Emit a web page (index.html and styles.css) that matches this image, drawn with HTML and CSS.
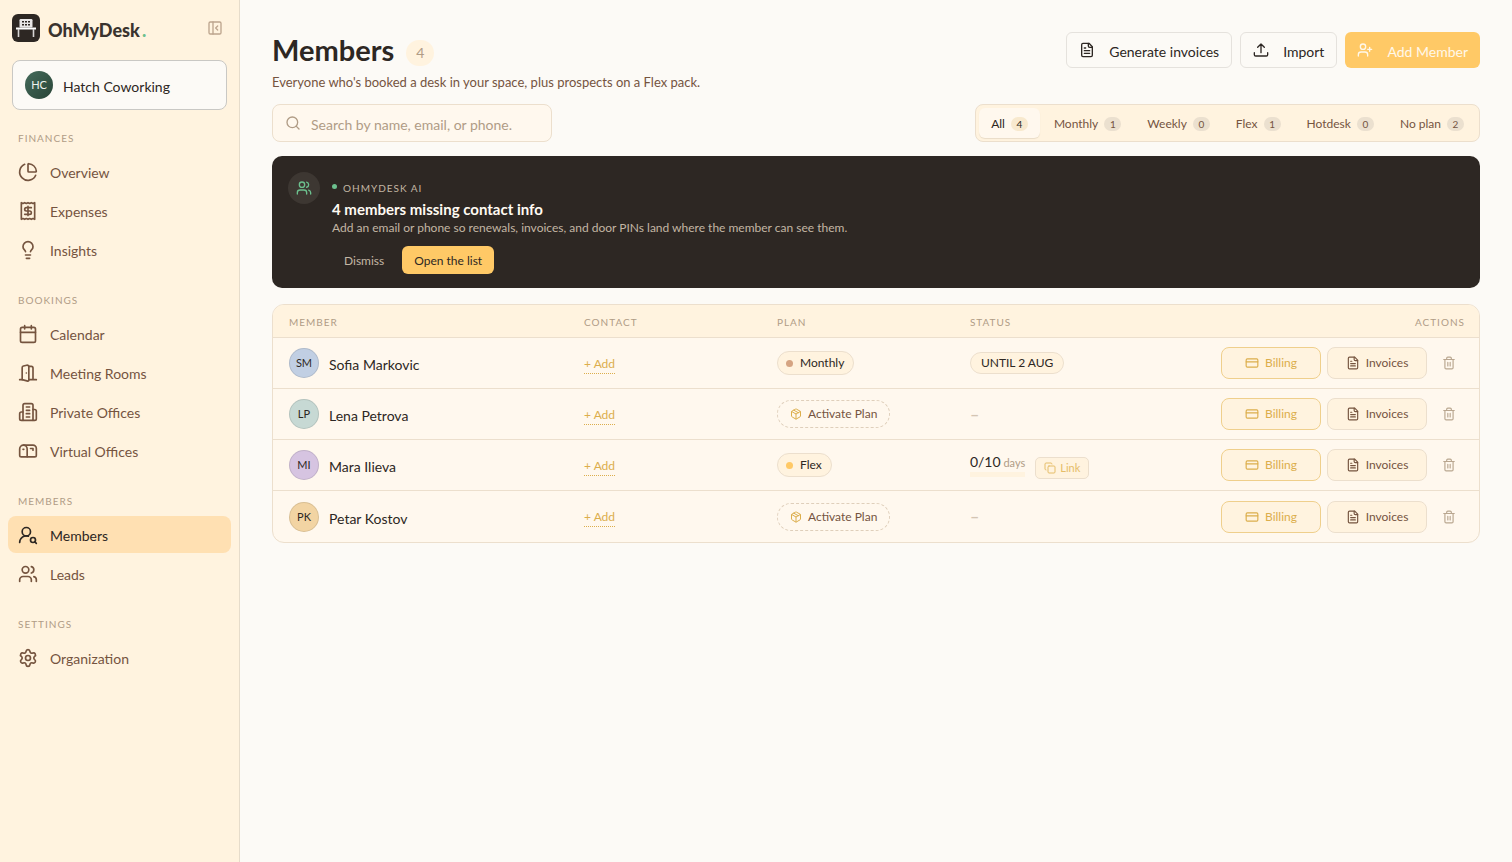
FILE: index.html
```html
<!DOCTYPE html>
<html lang="en">
<head>
<meta charset="utf-8">
<title>Members – OhMyDesk</title>
<link rel="stylesheet" href="styles.css">
</head>
<body>
<svg class="sprite" aria-hidden="true">
  <symbol id="i-panel" viewBox="0 0 24 24"><rect width="18" height="18" x="3" y="3" rx="2"/><path d="M9 3v18M16 15l-3-3 3-3"/></symbol>
  <symbol id="i-pie" viewBox="0 0 24 24"><path d="M21 12c.552 0 1.005-.449.95-.998a10 10 0 0 0-8.953-8.951c-.55-.055-.998.398-.998.95v8a1 1 0 0 0 1 1z"/><path d="M21.21 15.89A10 10 0 1 1 8 2.83"/></symbol>
  <symbol id="i-receipt" viewBox="0 0 24 24"><path d="M4 2v20l2-1 2 1 2-1 2 1 2-1 2 1 2-1 2 1V2l-2 1-2-1-2 1-2-1-2 1-2-1-2 1Z"/><path d="M16 8h-6a2 2 0 1 0 0 4h4a2 2 0 1 1 0 4H8M12 17.500V6.500"/></symbol>
  <symbol id="i-bulb" viewBox="0 0 24 24"><path d="M15 14c.2-1 .7-1.700 1.500-2.500 1-.9 1.500-2.200 1.500-3.500A6 6 0 0 0 6 8c0 1 .2 2.200 1.500 3.500.7.7 1.300 1.500 1.500 2.500M9 18h6M10 22h4"/></symbol>
  <symbol id="i-calendar" viewBox="0 0 24 24"><path d="M8 2v4M16 2v4M3 10h18"/><rect width="18" height="18" x="3" y="4" rx="2"/></symbol>
  <symbol id="i-door" viewBox="0 0 24 24"><path d="M13 4h3a2 2 0 0 1 2 2v14M2 20h3M13 20h9M10 12v.01"/><path d="M13 4.562v16.157a1 1 0 0 1-1.242.97L5 20V5.562a2 2 0 0 1 1.515-1.940l4-1A2 2 0 0 1 13 4.561Z"/></symbol>
  <symbol id="i-building" viewBox="0 0 24 24"><path d="M6 22V4a2 2 0 0 1 2-2h8a2 2 0 0 1 2 2v18Z"/><path d="M6 12H4a2 2 0 0 0-2 2v6a2 2 0 0 0 2 2h2M18 9h2a2 2 0 0 1 2 2v9a2 2 0 0 1-2 2h-2M10 6h4M10 10h4M10 14h4M10 18h4"/></symbol>
  <symbol id="i-mailbox" viewBox="0 0 24 24"><path d="M22 17a2 2 0 0 1-2 2H4a2 2 0 0 1-2-2V9.500C2 7 4 5 6.500 5H18c2.200 0 4 1.800 4 4z"/><path d="M15 9h3v2M6.500 5C9 5 11 7 11 9.500V19M6 10h1"/></symbol>
  <symbol id="i-user-search" viewBox="0 0 24 24"><circle cx="10" cy="8" r="5"/><path d="M2 21a8 8 0 0 1 10.434-7.620"/><circle cx="18" cy="18" r="3"/><path d="m22 22-1.900-1.900"/></symbol>
  <symbol id="i-users" viewBox="0 0 24 24"><path d="M16 21v-2a4 4 0 0 0-4-4H6a4 4 0 0 0-4 4v2"/><circle cx="9" cy="7" r="4"/><path d="M22 21v-2a4 4 0 0 0-3-3.870M16 3.130a4 4 0 0 1 0 7.750"/></symbol>
  <symbol id="i-gear" viewBox="0 0 24 24"><path d="M9.671 4.136a2.340 2.340 0 0 1 4.659 0 2.340 2.340 0 0 0 3.319 1.915 2.340 2.340 0 0 1 2.330 4.033 2.340 2.340 0 0 0 0 3.831 2.340 2.340 0 0 1-2.330 4.033 2.340 2.340 0 0 0-3.319 1.915 2.340 2.340 0 0 1-4.659 0 2.340 2.340 0 0 0-3.320-1.915 2.340 2.340 0 0 1-2.330-4.033 2.340 2.340 0 0 0 0-3.831A2.340 2.340 0 0 1 6.350 6.051a2.340 2.340 0 0 0 3.319-1.915"/><circle cx="12" cy="12" r="3"/></symbol>
  <symbol id="i-search" viewBox="0 0 24 24"><circle cx="11" cy="11" r="8"/><path d="m21 21-4.300-4.300"/></symbol>
  <symbol id="i-file" viewBox="0 0 24 24"><path d="M15 2H6a2 2 0 0 0-2 2v16a2 2 0 0 0 2 2h12a2 2 0 0 0 2-2V7Z"/><path d="M14 2v4a2 2 0 0 0 2 2h4M10 9H8M16 13H8M16 17H8"/></symbol>
  <symbol id="i-upload" viewBox="0 0 24 24"><path d="M12 3v13M17 8l-5-5-5 5M22 16v3a2 2 0 0 1-2 2H4a2 2 0 0 1-2-2v-3"/></symbol>
  <symbol id="i-user-plus" viewBox="0 0 24 24"><path d="M16 21v-2a4 4 0 0 0-4-4H6a4 4 0 0 0-4 4v2"/><circle cx="9" cy="7" r="4"/><path d="M19 8v6M22 11h-6"/></symbol>
  <symbol id="i-package" viewBox="0 0 24 24"><path d="M12 22V12M3.290 7 12 12l8.710-5M7.500 4.270l9 5.150M11 21.730a2 2 0 0 0 2 0l7-4A2 2 0 0 0 21 16V8a2 2 0 0 0-1-1.730l-7-4a2 2 0 0 0-2 0l-7 4A2 2 0 0 0 3 8v8a2 2 0 0 0 1 1.730z"/></symbol>
  <symbol id="i-copy" viewBox="0 0 24 24"><rect width="14" height="14" x="8" y="8" rx="2"/><path d="M4 16c-1.100 0-2-.9-2-2V4c0-1.100.9-2 2-2h10c1.100 0 2 .9 2 2"/></symbol>
  <symbol id="i-card" viewBox="0 0 24 24"><rect width="20" height="14" x="2" y="5" rx="2"/><path d="M2 10h20"/></symbol>
  <symbol id="i-trash" viewBox="0 0 24 24"><path d="M3 6h18M19 6v14a2 2 0 0 1-2 2H7a2 2 0 0 1-2-2V6M8 6V4a2 2 0 0 1 2-2h4a2 2 0 0 1 2 2v2M10 11v6M14 11v6"/></symbol>
</svg>

<div class="app">
  <aside class="sidebar">
    <div class="brand">
      <svg class="logo" viewBox="0 0 28 28" aria-hidden="true">
        <rect width="28" height="28" rx="6" fill="#2d2723"/>
        <rect x="7.500" y="5" width="13" height="8.500" rx="1.200" fill="#e8e6e6"/>
        <path d="M10 7.700h8M10 10.700h8" stroke="#2d2723" stroke-width="1.600" stroke-dasharray="2 1"/>
        <path d="M4 14.500h20" stroke="#fff" stroke-width="2"/>
        <path d="M6.500 15v8M21.500 15v8" stroke="#d6d4d4" stroke-width="1.600"/>
      </svg>
      <span class="wordmark">OhMyDesk<span class="wordmark-dot">.</span></span>
      <button class="collapse" aria-label="Collapse sidebar"><svg class="icon s16"><use href="#i-panel"/></svg></button>
    </div>
    <button class="workspace"><span class="workspace-avatar">HC</span><span class="workspace-name">Hatch Coworking</span></button>
    <nav class="nav">
      <section class="nav-group">
        <h2>Finances</h2>
        <a href="#"><svg class="icon s20"><use href="#i-pie"/></svg><span>Overview</span></a>
        <a href="#"><svg class="icon s20"><use href="#i-receipt"/></svg><span>Expenses</span></a>
        <a href="#"><svg class="icon s20"><use href="#i-bulb"/></svg><span>Insights</span></a>
      </section>
      <section class="nav-group">
        <h2>Bookings</h2>
        <a href="#"><svg class="icon s20"><use href="#i-calendar"/></svg><span>Calendar</span></a>
        <a href="#"><svg class="icon s20"><use href="#i-door"/></svg><span>Meeting Rooms</span></a>
        <a href="#"><svg class="icon s20"><use href="#i-building"/></svg><span>Private Offices</span></a>
        <a href="#"><svg class="icon s20"><use href="#i-mailbox"/></svg><span>Virtual Offices</span></a>
      </section>
      <section class="nav-group">
        <h2>Members</h2>
        <a href="#" class="active" aria-current="page"><svg class="icon s20"><use href="#i-user-search"/></svg><span>Members</span></a>
        <a href="#"><svg class="icon s20"><use href="#i-users"/></svg><span>Leads</span></a>
      </section>
      <section class="nav-group">
        <h2>Settings</h2>
        <a href="#"><svg class="icon s20"><use href="#i-gear"/></svg><span>Organization</span></a>
      </section>
    </nav>
  </aside>

  <main class="main">
    <header class="page-head">
      <div>
        <div class="title-row"><h1>Members</h1><span class="total">4</span></div>
        <p class="subtitle">Everyone who's booked a desk in your space, plus prospects on a Flex pack.</p>
      </div>
      <div class="head-actions">
        <button class="btn"><svg class="icon s16"><use href="#i-file"/></svg><span>Generate invoices</span></button>
        <button class="btn"><svg class="icon s16"><use href="#i-upload"/></svg><span>Import</span></button>
        <button class="btn btn-primary"><svg class="icon s16"><use href="#i-user-plus"/></svg><span>Add Member</span></button>
      </div>
    </header>

    <div class="toolbar">
      <label class="search"><svg class="icon s16"><use href="#i-search"/></svg><input type="search" aria-label="Search members" placeholder="Search by name, email, or phone."></label>
      <div class="tabs">
        <button class="tab selected" aria-pressed="true">All<span>4</span></button>
        <button class="tab">Monthly<span>1</span></button>
        <button class="tab">Weekly<span>0</span></button>
        <button class="tab">Flex<span>1</span></button>
        <button class="tab">Hotdesk<span>0</span></button>
        <button class="tab">No plan<span>2</span></button>
      </div>
    </div>

    <section class="notice">
      <div class="notice-icon"><svg class="icon s16"><use href="#i-users"/></svg></div>
      <div>
        <div class="eyebrow">OhMyDesk AI</div>
        <h2>4 members missing contact info</h2>
        <p>Add an email or phone so renewals, invoices, and door PINs land where the member can see them.</p>
        <div class="notice-actions"><button class="dismiss">Dismiss</button><button class="open">Open the list</button></div>
      </div>
    </section>

    <div class="table-card">
      <table>
        <colgroup><col class="c-member"><col class="c-mid"><col class="c-mid"><col class="c-mid"><col class="c-actions"></colgroup>
        <thead><tr><th>Member</th><th>Contact</th><th>Plan</th><th>Status</th><th class="end">Actions</th></tr></thead>
        <tbody>
          <tr>
            <td><div class="person"><span class="avatar blue">SM</span><span>Sofia Markovic</span></div></td>
            <td><button class="add">+ Add</button></td>
            <td><span class="plan monthly">Monthly</span></td>
            <td><span class="until">UNTIL 2 AUG</span></td>
            <td><div class="row-actions"><button class="act billing"><svg class="icon s14"><use href="#i-card"/></svg>Billing</button><button class="act"><svg class="icon s14"><use href="#i-file"/></svg>Invoices</button><button class="trash" aria-label="Delete Sofia Markovic"><svg class="icon s14"><use href="#i-trash"/></svg></button></div></td>
          </tr>
          <tr>
            <td><div class="person"><span class="avatar teal">LP</span><span>Lena Petrova</span></div></td>
            <td><button class="add">+ Add</button></td>
            <td><button class="activate"><svg class="icon s12"><use href="#i-package"/></svg>Activate Plan</button></td>
            <td><span class="none">–</span></td>
            <td><div class="row-actions"><button class="act billing"><svg class="icon s14"><use href="#i-card"/></svg>Billing</button><button class="act"><svg class="icon s14"><use href="#i-file"/></svg>Invoices</button><button class="trash" aria-label="Delete Lena Petrova"><svg class="icon s14"><use href="#i-trash"/></svg></button></div></td>
          </tr>
          <tr>
            <td><div class="person"><span class="avatar violet">MI</span><span>Mara Ilieva</span></div></td>
            <td><button class="add">+ Add</button></td>
            <td><span class="plan flex">Flex</span></td>
            <td><div class="usage"><span class="days"><span class="count">0/10</span> days</span><button class="link"><svg class="icon s12"><use href="#i-copy"/></svg>Link</button></div></td>
            <td><div class="row-actions"><button class="act billing"><svg class="icon s14"><use href="#i-card"/></svg>Billing</button><button class="act"><svg class="icon s14"><use href="#i-file"/></svg>Invoices</button><button class="trash" aria-label="Delete Mara Ilieva"><svg class="icon s14"><use href="#i-trash"/></svg></button></div></td>
          </tr>
          <tr>
            <td><div class="person"><span class="avatar amber">PK</span><span>Petar Kostov</span></div></td>
            <td><button class="add">+ Add</button></td>
            <td><button class="activate"><svg class="icon s12"><use href="#i-package"/></svg>Activate Plan</button></td>
            <td><span class="none">–</span></td>
            <td><div class="row-actions"><button class="act billing"><svg class="icon s14"><use href="#i-card"/></svg>Billing</button><button class="act"><svg class="icon s14"><use href="#i-file"/></svg>Invoices</button><button class="trash" aria-label="Delete Petar Kostov"><svg class="icon s14"><use href="#i-trash"/></svg></button></div></td>
          </tr>
        </tbody>
      </table>
    </div>
  </main>
</div>
</body>
</html>
```

FILE: styles.css
```css
:root {
  --ink: #2d2723;
  --brown: #75543f;
  --muted: #b09c86;
  --cream: #fff3df;
  --paper: #fff8ee;
  --line: #ecdfcd;
  --yellow: #ffc966;
  --gold: #dcae4c;
}

* { box-sizing: border-box; }

body {
  margin: 0;
  background: #fcfaf6;
  color: var(--ink);
  font: 14px/20px Lato, "Noto Sans", sans-serif;
}

h1, h2, p { margin: 0; }

button, input { font: inherit; color: inherit; }

button {
  padding: 0;
  border: 0;
  background: none;
  white-space: nowrap;
  cursor: pointer;
}

.sprite { display: none; }

.icon {
  flex: none;
  fill: none;
  stroke: currentColor;
  stroke-width: 2;
  stroke-linecap: round;
  stroke-linejoin: round;
}

.s12 { width: 12px; height: 12px; }
.s14 { width: 14px; height: 14px; }
.s16 { width: 16px; height: 16px; }
.s20 { width: 20px; height: 20px; }

.app { display: flex; min-height: 100vh; }

/* Sidebar */
.sidebar {
  flex: none;
  width: 240px;
  border-right: 1px solid #e6dccb;
  background: var(--cream);
}

.brand {
  display: flex;
  align-items: center;
  height: 56px;
  padding: 0 16px 0 12px;
}

.logo { width: 28px; height: 28px; }

.wordmark {
  flex: 1;
  padding: 4px 0 0 8px;
  color: #3a332e;
  font-size: 18px;
  font-weight: 900;
}

.wordmark-dot { padding-left: 2px; color: #6cc08e; }

.collapse { display: flex; color: #bda58e; }

.workspace {
  display: flex;
  align-items: center;
  gap: 10px;
  width: 215px;
  height: 50px;
  margin: 4px 12px 18px;
  padding: 0 12px;
  border: 1px solid #c9c8c4;
  border-radius: 8px;
  background: #fcfaf6;
}

.workspace-avatar {
  display: grid;
  place-items: center;
  width: 28px;
  height: 28px;
  border-radius: 50%;
  background: linear-gradient(135deg, #456b5b, #294437);
  color: #eef2ee;
  font-size: 11px;
}

.workspace-name { padding-top: 4px; }

.nav { padding: 0 8px; }

.nav-group { margin-bottom: 22px; }

.nav-group h2 {
  height: 25px;
  padding-left: 10px;
  color: var(--muted);
  font-size: 10px;
  font-weight: 400;
  letter-spacing: 1px;
  text-transform: uppercase;
}

.nav a {
  display: flex;
  align-items: center;
  gap: 12px;
  height: 37px;
  margin-bottom: 2px;
  padding: 0 10px;
  border-radius: 8px;
  color: var(--brown);
  text-decoration: none;
}

.nav a span { padding-top: 2px; }

.nav .active { background: #ffe0b2; color: var(--ink); }

/* Page heading */
.main { flex: 1; min-width: 0; padding: 32px; }

.page-head {
  display: flex;
  align-items: flex-start;
  justify-content: space-between;
  gap: 24px;
}

.title-row { display: flex; align-items: flex-start; gap: 12px; height: 40px; }

h1 { font-size: 29px; line-height: 36px; font-weight: 700; }

.total {
  display: grid;
  place-items: center;
  width: 28px;
  height: 26px;
  margin-top: 8px;
  border-radius: 13px;
  background: var(--cream);
  color: var(--muted);
}

.subtitle { color: var(--brown); font-size: 13px; }

.head-actions { display: flex; gap: 8px; }

.btn {
  display: flex;
  align-items: center;
  gap: 14px;
  height: 36px;
  padding: 0 12px;
  border: 1px solid #e5e2dd;
  border-radius: 6px;
}

.btn span { padding-top: 4px; }

.btn-primary { border: 0; background: var(--yellow); color: #fff8ea; }

/* Search and filters */
.toolbar {
  display: flex;
  justify-content: space-between;
  gap: 24px;
  margin: 12px 0 14px;
}

.search {
  display: flex;
  align-items: center;
  gap: 10px;
  width: 280px;
  height: 38px;
  padding: 0 12px;
  border: 1px solid var(--line);
  border-radius: 8px;
  background: var(--paper);
  color: var(--muted);
}

.search input {
  flex: 1;
  min-width: 0;
  padding: 4px 0 0;
  border: 0;
  outline: 0;
  background: none;
}

.search input::placeholder { color: var(--muted); opacity: 1; }

.tabs {
  display: flex;
  gap: 2px;
  height: 38px;
  padding: 3px;
  border: 1px solid var(--line);
  border-radius: 8px;
  background: var(--cream);
}

.tab {
  display: flex;
  align-items: center;
  gap: 6px;
  padding: 2px 12px 0;
  border-radius: 6px;
  color: var(--brown);
  font-size: 12px;
}

.tab span {
  min-width: 17px;
  padding: 0 5px;
  border-radius: 7px;
  background: #ebe0cf;
  font-size: 10px;
  line-height: 14px;
}

.tab.selected { background: var(--paper); box-shadow: 0 1px 1px #e9dcc8; color: var(--ink); }

.tab.selected span { background: #f8e9ce; }

/* Assistant notice */
.notice {
  display: flex;
  gap: 12px;
  margin-bottom: 16px;
  padding: 16px 16px 14px;
  border-radius: 10px;
  background: #2d2723;
}

.notice-icon {
  display: grid;
  flex: none;
  place-items: center;
  width: 32px;
  height: 32px;
  border-radius: 50%;
  background: #3d3732;
  color: #6cc08e;
}

.eyebrow {
  display: flex;
  align-items: center;
  gap: 6px;
  height: 27px;
  padding-top: 5px;
  color: #c3b6a4;
  font-size: 10px;
  letter-spacing: 1px;
  text-transform: uppercase;
}

.eyebrow::before {
  width: 5px;
  height: 5px;
  margin-bottom: 4px;
  border-radius: 50%;
  background: #6cc08e;
  content: "";
}

.notice h2 { color: #fffaf2; font-size: 15px; font-weight: 700; }

.notice p { margin-top: 1px; color: #c3b6a4; font-size: 12px; line-height: 16px; }

.notice-actions { display: flex; gap: 6px; margin-top: 10px; font-size: 12px; }

.notice-actions button { height: 28px; padding: 2px 12px 0; border-radius: 6px; }

.dismiss { color: #c3b6a4; }

.open { background: var(--yellow); }

/* Members table */
.table-card {
  overflow: hidden;
  border: 1px solid var(--line);
  border-radius: 12px;
  background: var(--paper);
}

table { width: 100%; border-collapse: separate; border-spacing: 0; table-layout: fixed; }

.c-member { width: 295px; }
.c-mid { width: 16%; }

th {
  height: 33px;
  padding: 2px 14px 0 16px;
  border-bottom: 1px solid var(--line);
  background: var(--cream);
  color: var(--muted);
  font-size: 10px;
  font-weight: 400;
  letter-spacing: 1px;
  text-align: left;
  text-transform: uppercase;
}

th.end { text-align: right; }

td { height: 51px; padding: 0 16px; border-bottom: 1px solid var(--line); }

tbody tr:last-child td { border-bottom: 0; }

.person { display: flex; align-items: center; gap: 10px; }

.person span:last-child { padding-top: 4px; }

.avatar {
  display: grid;
  place-items: center;
  width: 30px;
  height: 30px;
  border: 1px solid rgb(45 39 35 / 12%);
  border-radius: 50%;
  font-size: 11px;
}

.blue { background: #c1cfe3; }
.teal { background: #c7d9d4; }
.violet { background: #d6c4e1; }
.amber { background: #f2d4a3; }

.add {
  border-bottom: 1px dotted var(--gold);
  color: var(--gold);
  font-size: 12px;
  line-height: 18px;
}

.plan, .until {
  display: inline-flex;
  align-items: center;
  border: 1px solid var(--line);
  border-radius: 12px;
  background: var(--cream);
  font-size: 12px;
  vertical-align: middle;
}

.plan { gap: 7px; height: 24px; padding: 0 9px 0 8px; }

.plan::before { width: 7px; height: 7px; border-radius: 50%; background: #d5a482; content: ""; }

.flex::before { background: var(--yellow); }

.until { height: 22px; padding: 0 10px; }

.activate {
  display: flex;
  align-items: center;
  gap: 6px;
  height: 28px;
  padding: 0 12px;
  border: 1px dashed #dfcfbb;
  border-radius: 14px;
  color: var(--brown);
  font-size: 12px;
}

.activate .icon { color: var(--gold); }

.none { color: #d4c5b3; font-size: 16px; font-weight: 700; }

.usage { display: flex; align-items: center; gap: 10px; }

.days { border-bottom: 5px solid var(--cream); color: var(--muted); font-size: 11px; line-height: 18px; }

.count { color: var(--ink); font-size: 14px; }

.link {
  display: flex;
  align-items: center;
  gap: 4px;
  height: 22px;
  margin-top: 6px;
  padding: 0 8px;
  border: 1px solid var(--line);
  border-radius: 5px;
  background: var(--cream);
  color: #e5bd68;
  font-size: 11px;
}

.row-actions { display: flex; align-items: center; justify-content: flex-end; gap: 6px; margin-right: -2px; }

.act {
  display: flex;
  align-items: center;
  justify-content: center;
  gap: 6px;
  width: 100px;
  height: 32px;
  border: 1px solid var(--line);
  border-radius: 8px;
  background: var(--cream);
  color: var(--brown);
  font-size: 12px;
}

.billing { border-color: #efcf8c; color: var(--gold); }

.trash { display: grid; place-items: center; width: 32px; height: 32px; color: #b9a68f; }
```
